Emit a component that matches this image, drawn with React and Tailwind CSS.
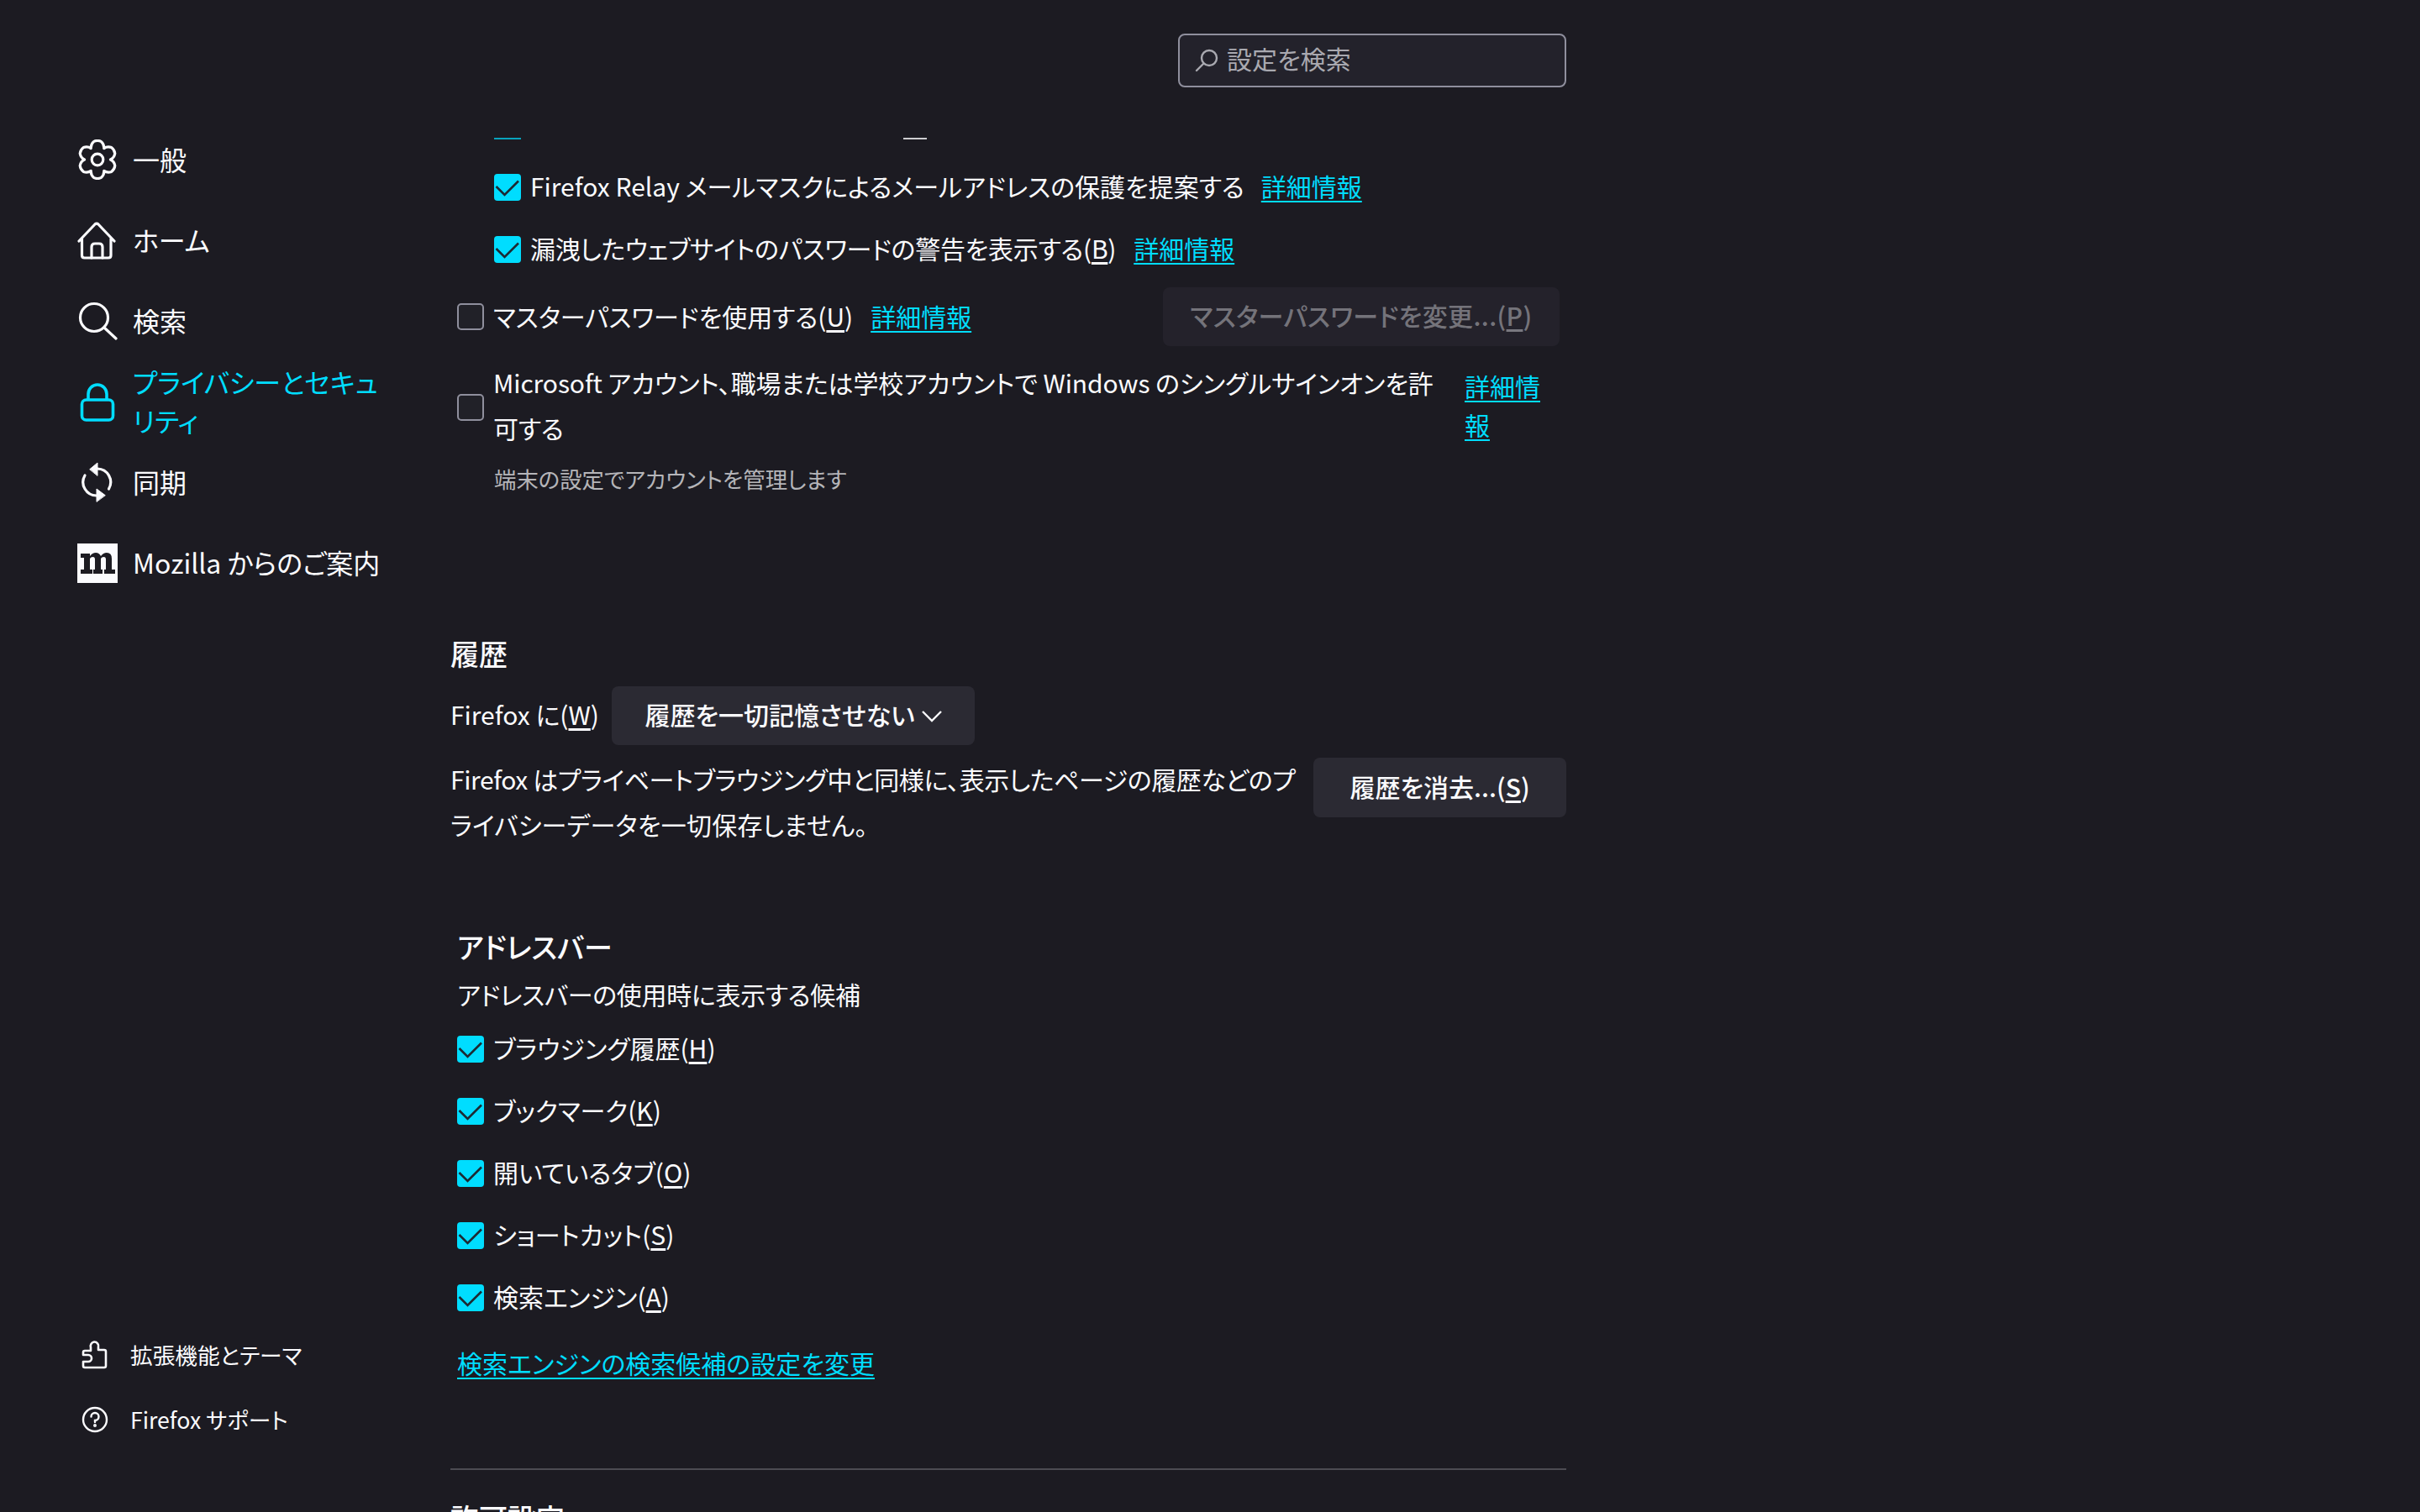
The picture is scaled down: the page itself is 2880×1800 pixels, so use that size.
function Check() {
  return (
    <span className="w-8 h-8 shrink-0 rounded-[4px] bg-[#00ddff] flex items-center justify-center">
      <svg width="32" height="32" viewBox="0 0 32 32" fill="none" stroke="#1c2a33" strokeWidth="2.6">
        <path d="M2.5 15 L12.5 25 L29 8.5" />
      </svg>
    </span>
  )
}

function Empty() {
  return <span className="block w-8 h-8 shrink-0 rounded-[5px] border-2 border-[#8f8f9d] bg-[#2b2a33]/40" />
}

function Link({ children, className = '' }) {
  return <a className={`text-[#00ddff] underline underline-offset-[5px] decoration-2 ${className}`}>{children}</a>
}

function Key({ children }) {
  return <>(<u className="underline-offset-[4px]">{children}</u>)</>
}

// six rounded lobes around the centre
function gearPath() {
  const pt = (r, deg) => {
    const a = (deg * Math.PI) / 180
    return `${(24 + r * Math.cos(a)).toFixed(2)} ${(24 + r * Math.sin(a)).toFixed(2)}`
  }
  let d = `M${pt(15.5, -120)}`
  for (let k = 0; k < 6; k++) {
    const a = -90 + 60 * k
    d += ` Q${pt(20, a - 24)} ${pt(22, a - 11)} Q${pt(23.5, a)} ${pt(22, a + 11)} Q${pt(20, a + 24)} ${pt(15.5, a + 30)}`
  }
  return d + ' Z'
}

function GearIcon() {
  return (
    <svg width="48" height="48" viewBox="0 0 48 48" fill="none" stroke="currentColor" strokeWidth="3.2" strokeLinejoin="round">
      <path d={gearPath()} />
      <circle cx="24" cy="24" r="6.8" />
    </svg>
  )
}

function HomeIcon() {
  return (
    <svg width="48" height="48" viewBox="0 0 48 48" fill="none" stroke="currentColor" strokeWidth="3.2" strokeLinejoin="round" strokeLinecap="round">
      <path d="M2 25 L21 5 Q23 3 25 5 L44 25 M5.5 22 V42 Q5.5 45 8.5 45 H37 Q40 45 40 42 V22" />
      <path d="M17 45 V32 Q17 28 21 28 H26 Q30 28 30 32 V45" />
    </svg>
  )
}

function SearchIcon() {
  return (
    <svg width="48" height="48" viewBox="0 0 48 48" fill="none" stroke="currentColor" strokeWidth="3.2" strokeLinecap="round">
      <circle cx="20" cy="20" r="16.5" />
      <path d="M32 32 L46 45" />
    </svg>
  )
}

function LockIcon() {
  return (
    <svg width="48" height="48" viewBox="0 0 48 48" fill="none" stroke="currentColor" strokeWidth="3.6">
      <rect x="5.5" y="22" width="37" height="24" rx="5" />
      <path d="M13 22 V15 A11 11 0 0 1 35 15 V22" />
    </svg>
  )
}

function SyncIcon() {
  return (
    <svg width="48" height="48" viewBox="0 0 48 48" fill="none" stroke="currentColor" strokeWidth="3.2" strokeLinecap="round">
      <path d="M24 8 A16 16 0 0 1 37.5 32" />
      <path d="M23 40 A16 16 0 0 1 9 16" />
      <path d="M15 8.5 L24 1 V16 Z" fill="currentColor" strokeWidth="1" strokeLinejoin="round" />
      <path d="M33 39.5 L23 32 V47 Z" fill="currentColor" strokeWidth="1" strokeLinejoin="round" />
    </svg>
  )
}

function MozillaIcon() {
  return (
    <svg width="48" height="47" viewBox="0 0 48 47">
      <rect width="48" height="47" fill="#fbfbfe" />
      <path fill="#1c1b22" d="M4 12 H15 V15 Q18 11 22 11 Q26 11 28 15 Q31 11 35 11 Q41 11 41 18 V31 H45 V36 H32 V31 H34 V19 Q34 16 31.5 16 Q29 16 28 18 V31 H30 V36 H19 V31 H21 V19 Q21 16 18.5 16 Q16 16 15 18 V31 H18 V36 H4 V31 H8 V17 H4 Z" />
    </svg>
  )
}

function PuzzleIcon() {
  return (
    <svg width="32" height="34" viewBox="0 0 32 34" fill="none" stroke="currentColor" strokeWidth="2.6" strokeLinejoin="round">
      <path d="M4 12 H11 V8 A5 5 0 0 1 15 1.5 A5 5 0 0 1 20 8 V11 H27 Q29 11 29 13 V30 Q29 32 27 32 H4 Q2 32 2 30 V25 H8 A4 4 0 0 0 8 17 H2 V14 Q2 12 4 12 Z" />
    </svg>
  )
}

function HelpIcon() {
  return (
    <svg width="32" height="32" viewBox="0 0 32 32" fill="none" stroke="currentColor" strokeWidth="2.4" strokeLinecap="round">
      <circle cx="16" cy="16" r="14" />
      <path d="M11.5 12.5 A4.5 4.5 0 1 1 16 17 V19" />
      <circle cx="16" cy="23" r="0.8" fill="currentColor" />
    </svg>
  )
}

function NavItem({ icon, children, active }) {
  return (
    <div className={`h-[96px] flex items-center gap-[18px] ${active ? 'text-[#00ddff]' : 'text-[#fbfbfe]'}`}>
      <span className="w-12 shrink-0 flex justify-center">{icon}</span>
      <span className="w-[305px] pb-[3px] text-[32px] leading-[46px]">{children}</span>
    </div>
  )
}

function OptionRow({ children }) {
  return (
    <div className="h-[74px] flex items-center gap-[11px]">
      <Check />
      <span className="pb-1">{children}</span>
    </div>
  )
}

export default function App() {
  return (
    <div
      className="h-screen w-full overflow-hidden flex bg-[#1c1b22] text-[#fbfbfe] text-[30px] leading-[54px] [font-feature-settings:'palt']"
      style={{ fontFamily: '"Noto Sans CJK JP", "Noto Sans", sans-serif' }}
    >
      {/* Sidebar */}
      <aside className="w-[536px] shrink-0 pl-[92px] pt-[142px] pb-[72px] flex flex-col justify-between">
        <nav>
          <NavItem icon={<GearIcon />}>一般</NavItem>
          <NavItem icon={<HomeIcon />}>ホーム</NavItem>
          <NavItem icon={<SearchIcon />}>検索</NavItem>
          <NavItem icon={<LockIcon />} active>プライバシーとセキュリティ</NavItem>
          <NavItem icon={<SyncIcon />}>同期</NavItem>
          <NavItem icon={<MozillaIcon />}>Mozilla からのご案内</NavItem>
        </nav>
        <div className="text-[26.67px]">
          <div className="h-[77px] flex items-center gap-[26px]">
            <span className="w-[32px] shrink-0 flex justify-center ml-[5px]"><PuzzleIcon /></span>
            <span>拡張機能とテーマ</span>
          </div>
          <div className="h-[77px] flex items-center gap-[26px]">
            <span className="w-[32px] shrink-0 flex justify-center ml-[5px]"><HelpIcon /></span>
            <span>Firefox サポート</span>
          </div>
        </div>
      </aside>

      {/* Content */}
      <main className="w-[1328px] shrink-0">
        <div className="h-[164px] pt-10 flex justify-end items-start">
          <div className="w-[462px] h-16 rounded-[8px] border-2 border-[#8f8f9d] bg-[#23222b] flex items-center pl-[18px] gap-[10px] text-[#a9a9b0]">
            <svg width="28" height="28" viewBox="0 0 28 28" fill="none" stroke="currentColor" strokeWidth="2.4" strokeLinecap="round">
              <circle cx="17" cy="11" r="9" />
              <path d="M10.5 17.5 L2 26" />
            </svg>
            <span className="pb-[6px]">設定を検索</span>
          </div>
        </div>

        <div className="h-[2px] flex">
          <span className="ml-[52px] w-8 bg-[#00ddff]/70" />
          <span className="ml-[455px] w-[28px] bg-[#fbfbfe]/80" />
        </div>

        <div className="pl-[52px] mt-5">
          <OptionRow>Firefox Relay メールマスクによるメールアドレスの保護を提案する<Link className="ml-[20px]">詳細情報</Link></OptionRow>
          <OptionRow><span className="tracking-[-0.27px]">漏洩したウェブサイトのパスワードの警告を表示する<Key>B</Key></span><Link className="ml-[21px]">詳細情報</Link></OptionRow>
        </div>

        <div className="mt-2 h-[70px] pl-2 pr-2 flex items-center gap-[11px]">
          <Empty />
          <span className="pb-[3px]">マスターパスワードを使用する<Key>U</Key><Link className="ml-[21px]">詳細情報</Link></span>
          <button className="ml-auto w-[472px] h-[70px] pb-1 rounded-[8px] bg-[#2b2a33]/50 text-[#fbfbfe]/40 font-medium tracking-[0.4px]">
            マスターパスワードを変更...<Key>P</Key>
          </button>
        </div>

        <div className="mt-4 pl-2 flex items-center gap-[11px]">
          <span className="block shrink-0 pt-[6px]"><Empty /></span>
          <span className="w-[1124px] shrink-0 tracking-[-0.1px]">Microsoft アカウント、職場または学校アカウントで Windows のシングルサインオンを許可する</span>
          <Link className="w-[92px] shrink-0 ml-[21px] leading-[46px]">詳細情報</Link>
        </div>

        <div className="mt-4 pl-[52px] h-10 leading-[36px] text-[26.4px] text-[#fbfbfe]/70">端末の設定でアカウントを管理します</div>

        <h2 className="mt-[162px] h-[50px] leading-[47px] text-[34px] font-medium">履歴</h2>
        <div className="mt-[13px] h-[70px] flex items-center gap-[15px]">
          <span className="pb-1">Firefox に<Key>W</Key></span>
          <button className="w-[432px] h-[70px] rounded-[8px] bg-[#2b2a33] font-medium flex items-center justify-center gap-2">
            <span className="pb-1">履歴を一切記憶させない</span>
            <svg width="24" height="24" viewBox="0 0 24 24" fill="none" stroke="currentColor" strokeWidth="2.4">
              <path d="M1 7 L12 18 L23 7" />
            </svg>
          </button>
        </div>
        <div className="mt-[13px] flex items-start justify-between">
          <p className="w-[1022px]"><span className="tracking-[-0.4px]">Firefox はプライベートブラウジング中と同様に、表示したページの履歴などのプ</span><span className="tracking-[0.2px]">ライバシーデータを一切保存しません。</span></p>
          <button className="w-[301px] h-[71px] mt-[2px] pb-1 rounded-[8px] bg-[#2b2a33] font-medium">履歴を消去...<Key>S</Key></button>
        </div>

        <div className="pl-2">
          <h2 className="mt-[95px] h-[50px] leading-[47px] text-[34px] font-medium">アドレスバー</h2>
          <p className="mt-3 h-10 leading-[37px] tracking-[-0.3px]">アドレスバーの使用時に表示する候補</p>
          <div className="mt-[7px]">
            <OptionRow>ブラウジング履歴<Key>H</Key></OptionRow>
            <OptionRow>ブックマーク<Key>K</Key></OptionRow>
            <OptionRow>開いているタブ<Key>O</Key></OptionRow>
            <OptionRow>ショートカット<Key>S</Key></OptionRow>
            <OptionRow>検索エンジン<Key>A</Key></OptionRow>
          </div>
          <div className="mt-[22px] h-10 leading-[37px]"><Link>検索エンジンの検索候補の設定を変更</Link></div>
        </div>

        <hr className="mt-[104px] border-0 h-[2px] bg-[#4c4b52]" />
        <h2 className="mt-[33px] h-[50px] leading-[47px] text-[34px] font-medium">許可設定</h2>
      </main>
    </div>
  )
}
